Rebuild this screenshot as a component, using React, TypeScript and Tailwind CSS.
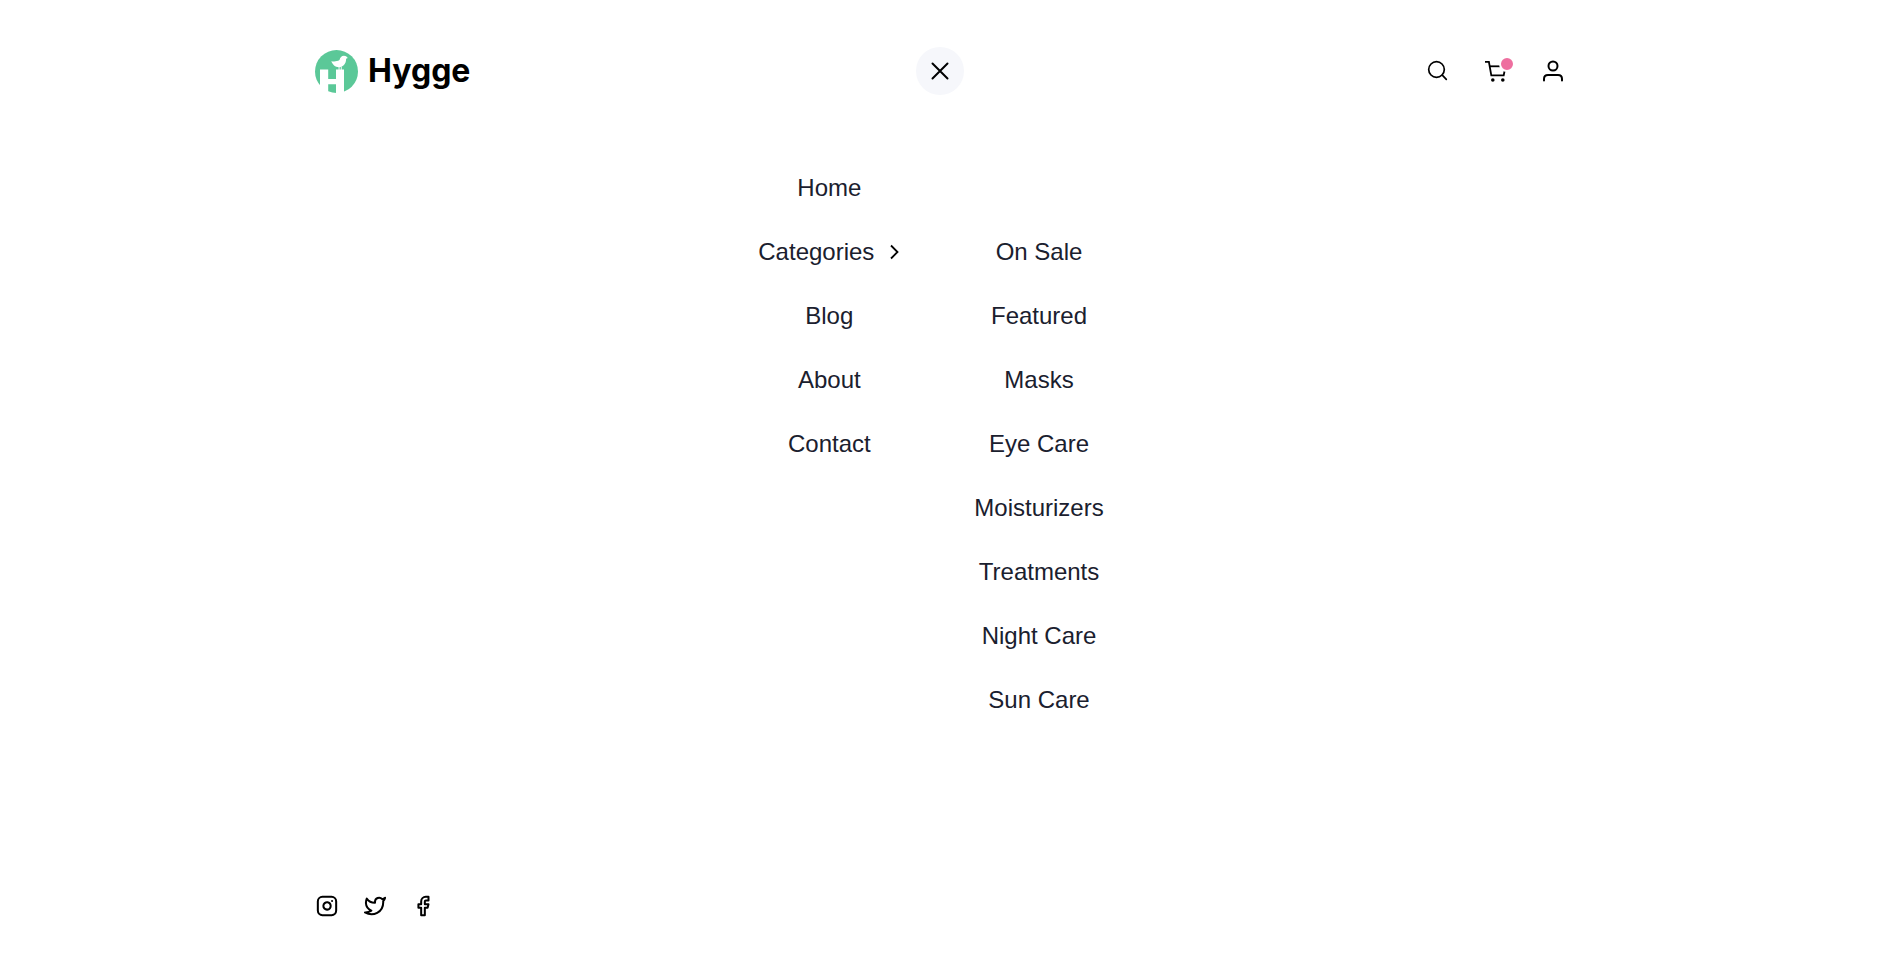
import type { ReactNode } from "react";
import { FiFacebook, FiInstagram, FiTwitter } from "react-icons/fi";

const pages = ["Home", "Categories", "Blog", "About", "Contact"];
const categories = [
  "On Sale",
  "Featured",
  "Masks",
  "Eye Care",
  "Moisturizers",
  "Treatments",
  "Night Care",
  "Sun Care",
];
const socials: { label: string; icon: ReactNode }[] = [
  { label: "Instagram", icon: <FiInstagram size={22} strokeWidth={2.2} /> },
  { label: "Twitter", icon: <FiTwitter size={22} strokeWidth={2.2} /> },
  { label: "Facebook", icon: <FiFacebook size={22} strokeWidth={2.2} /> },
];

function LogoMark() {
  return (
    <svg width="43" height="43" viewBox="0 0 43 43" aria-hidden="true">
      <circle cx="21.5" cy="21.5" r="21.5" fill="#5bc898" />
      <g fill="#fff">
        <path d="M5 19.6h8.2v9.4h7.8v-9.4h8V43h-8v-8.8h-7.8V43H5z" />
        <path d="M16.3 11.2c3.3.5 5.6.3 8.2-1.2.6-2.6 2-4.3 4.5-4.3 1.7 0 2.5.8 3.8 2.3l-1.7.8c.1 5-2.9 8.4-7 8.4-4.2 0-6.4-2.8-7.8-6z" />
        <path d="M23.6 16.5h.9v3.500h-.9zM25.8 16.500h.9v3.500h-.9z" />
      </g>
    </svg>
  );
}

function SearchIcon() {
  return (
    <svg width="24" height="24" viewBox="0 0 24 24" fill="none" stroke="currentColor" strokeWidth="1.7" strokeLinecap="round" aria-hidden="true">
      <circle cx="9.5" cy="10.5" r="7.8" />
      <path d="M15.3 16.2 19.3 20.3" />
    </svg>
  );
}

function CartIcon() {
  return (
    <svg width="24" height="24" viewBox="0 0 24 24" fill="none" stroke="currentColor" strokeWidth="1.8" aria-hidden="true">
      <path d="M1 2.8h3.9L7.3 16.3h12.4L20.8 11" />
      <path d="M5.8 7.3h14.5" />
      <circle cx="8.8" cy="21" r="1.8" fill="currentColor" stroke="none" />
      <circle cx="18.8" cy="21" r="1.8" fill="currentColor" stroke="none" />
    </svg>
  );
}

function UserIcon() {
  return (
    <svg width="24" height="24" viewBox="0 0 24 24" fill="none" stroke="currentColor" strokeWidth="2" strokeLinecap="round" aria-hidden="true">
      <circle cx="12" cy="7" r="4.5" />
      <path d="M3 21.5v-1.500c0-2.500 1.500-4 4-4h10c2.500 0 4 1.500 4 4v1.500" />
    </svg>
  );
}

export default function App() {
  return (
    <div className="flex min-h-screen flex-col bg-white font-[family-name:'Liberation_Sans',sans-serif] text-black">
      <div className="mx-auto flex w-full max-w-[1250px] grow flex-col pt-[47px] pb-12">
        <header className="grid grid-cols-[1fr_auto_1fr] items-center">
          <a href="#" className="flex items-center gap-[10px]">
            <LogoMark />
            <span className="font-[family-name:Inter,sans-serif] text-[32px] leading-10 font-bold">Hygge</span>
          </a>
          <button type="button" aria-label="Close menu" className="flex size-12 items-center justify-center rounded-full bg-[#f6f7fb]">
            <svg width="18" height="18" viewBox="0 0 18 18" fill="none" stroke="currentColor" strokeWidth="2" strokeLinecap="round" aria-hidden="true">
              <path d="M1.5 1.5l15 15M16.5 1.5l-15 15" />
            </svg>
          </button>
          <div className="flex items-center justify-end gap-[33px]">
            <button type="button" aria-label="Search">
              <SearchIcon />
            </button>
            <button type="button" aria-label="Cart" className="relative">
              <CartIcon />
              <span className="absolute -top-[3px] -right-[7px] size-4 rounded-full border-2 border-white bg-[#ee6f9f]" />
            </button>
            <button type="button" aria-label="Account">
              <UserIcon />
            </button>
          </div>
        </header>

        <nav className="mt-[77px] flex justify-center gap-[74px] pr-[18px] text-2xl leading-8 text-[#1a202e]">
          <ul className="flex flex-col items-center gap-8">
            {pages.map((page) => (
              <li key={page}>
                <a href="#" className="flex items-center gap-[10px]">
                  {page}
                  {page === "Categories" && (
                    <svg width="16" height="16" viewBox="0 0 16 16" fill="none" stroke="#000" strokeWidth="1.8" aria-hidden="true">
                      <path d="M7 1.5 13.5 8 7 14.5" />
                    </svg>
                  )}
                </a>
              </li>
            ))}
          </ul>
          <ul className="flex flex-col items-center gap-8 pt-16">
            {categories.map((category) => (
              <li key={category}>
                <a href="#">{category}</a>
              </li>
            ))}
          </ul>
        </nav>

        <div className="mt-auto flex gap-6 pt-12">
          {socials.map(({ label, icon }) => (
            <a key={label} href="#" aria-label={label} className="flex size-6 items-center justify-center">
              {icon}
            </a>
          ))}
        </div>
      </div>
    </div>
  );
}
